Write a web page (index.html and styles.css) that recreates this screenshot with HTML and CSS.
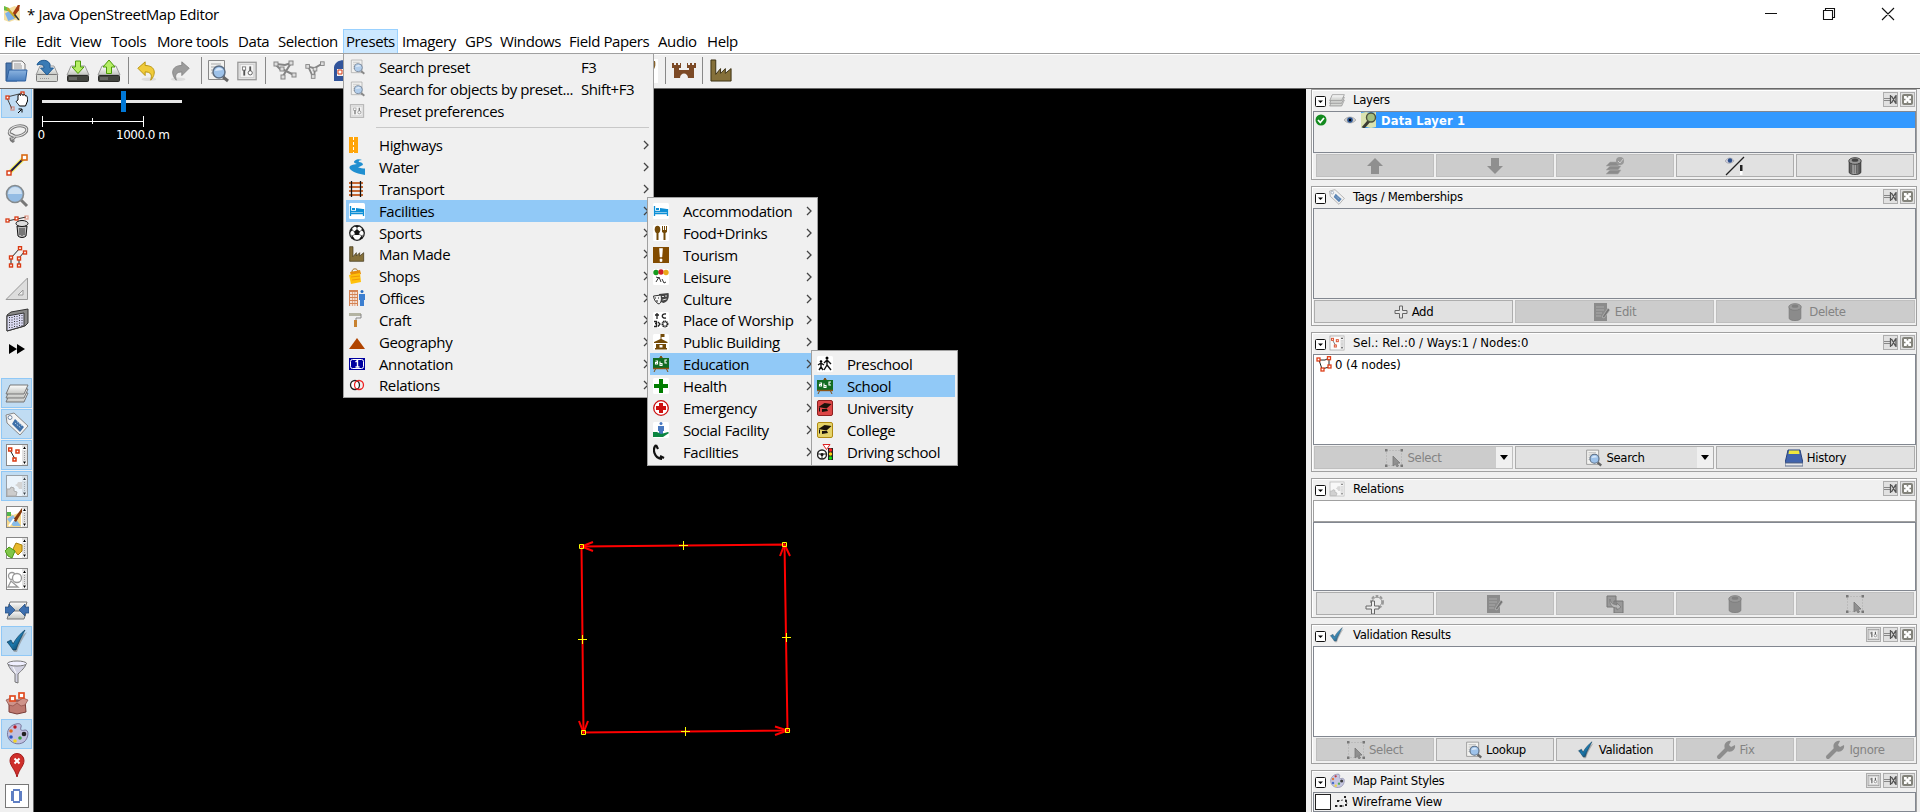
FILE: index.html
```html
<!DOCTYPE html>
<html lang="en">
<head>
<meta charset="utf-8">
<title>Java OpenStreetMap Editor</title>
<link rel="stylesheet" href="styles.css">
</head>
<body>
<svg class="defs" aria-hidden="true">
  <defs>
    <linearGradient id="g-gray" x2="0" y2="1"><stop offset="0" stop-color="#fff"/><stop offset="1" stop-color="#c2c4c0"/></linearGradient>
    <linearGradient id="g-blue" x2="0" y2="1"><stop offset="0" stop-color="#8cb4e0"/><stop offset="1" stop-color="#4a7fbf"/></linearGradient>
    <linearGradient id="g-check" x2="1" y2="1"><stop offset="0" stop-color="#0a3c60"/><stop offset=".5" stop-color="#1d7bb0"/><stop offset="1" stop-color="#0b2c44"/></linearGradient>
    <linearGradient id="g-can" x2="1" y2="0"><stop offset="0" stop-color="#444"/><stop offset=".4" stop-color="#bbb"/><stop offset="1" stop-color="#444"/></linearGradient>
  </defs>
  <symbol id="folder" viewBox="0 0 24 24"><path d="M2 4h7l1 2h3v16H2z" fill="#4b79b0" stroke="#2c5488"/><path d="M8 2h10l3 3v9H8z" fill="#f4f4f4" stroke="#777"/><path d="M10 5h7M10 7h8M10 9h8" stroke="#999"/><path d="M5 11h18l-1.500 11H2.500z" fill="url(#g-blue)" stroke="#2c5f9f"/></symbol>
  <symbol id="disk" viewBox="0 0 24 24"><path d="M5 7h14l4 9H1z" fill="url(#g-gray)" stroke="#999"/><rect x="1.500" y="15.500" width="21" height="7" rx="1" fill="#d5d7d3" stroke="#777"/></symbol>
  <symbol id="disk-dark" viewBox="0 0 24 24"><path d="M5 7h14l4 9H1z" fill="url(#g-gray)" stroke="#999"/><rect x="1.500" y="16.500" width="21" height="6" rx="1" fill="#42443f" stroke="#2a2b28"/><path d="M4 18v3M6 18v3M8 18v3M10 18v3" stroke="#aaa" stroke-width=".7"/></symbol>
  <symbol id="save" viewBox="0 0 24 24"><use href="#disk"/><path d="M2 6C3 1 12-1 15 5v4h3.500L12 16 5.500 9H9C9 5 5 5 2 6z" fill="#3a7bb5" stroke="#205a92"/><path d="M5 19.500h10" stroke="#999" stroke-dasharray="1 1"/></symbol>
  <symbol id="download" viewBox="0 0 24 24"><use href="#disk-dark"/><path d="M9.500 2h5v6H18l-6 6.500L6 8h3.500z" fill="#b6ee66" stroke="#4b9a08"/></symbol>
  <symbol id="upload" viewBox="0 0 24 24"><use href="#disk-dark"/><path d="M12 1l6 7h-3.500v6.500h-5V8H6z" fill="#b6ee66" stroke="#4b9a08"/></symbol>
  <symbol id="undo" viewBox="0 0 24 24"><ellipse cx="14" cy="21" rx="8" ry="2" fill="#ddd"/><path d="M2 9l8-7v4c12 0 12 10 6 16 2-6 0-9-6-9v4z" fill="#f0cb3a" stroke="#b58f08"/></symbol>
  <symbol id="redo" viewBox="0 0 24 24"><ellipse cx="10" cy="21" rx="8" ry="2" fill="#ddd"/><path d="M22 9l-8-7v4C2 6 2 16 8 22c-2-6 0-9 6-9v4z" fill="#9c9c9c" stroke="#858585"/></symbol>
  <symbol id="search" viewBox="0 0 24 24"><path d="M3.500 1.500h16v19h-16z" fill="#f2f2f0" stroke="#888"/><path d="M6 5h10M6 8h5M6 11h3M6 14h3" stroke="#aaa"/><path d="M18 18l5 4" stroke="#666" stroke-width="3"/><circle cx="14" cy="13" r="6" fill="#9dc2ea" stroke="#5c6e84" stroke-width="1.500"/><path d="M10 12c1-4 6-4 8-1z" fill="#d8e8fa"/></symbol>
  <symbol id="prefs" viewBox="0 0 24 24"><rect x="2" y="2.500" width="20" height="19" fill="#e2e2e2" stroke="#999" stroke-width="1.400"/><rect x="4.500" y="5" width="15" height="14" fill="#f4f4f4" stroke="#ccc"/><rect x="7" y="7.500" width="3.500" height="3.500" fill="#fff" stroke="#777"/><path d="M9 11v6" stroke="#555" stroke-width="2"/><path d="M15.500 7v6" stroke="#555" stroke-width="2"/><circle cx="15.500" cy="14" r="2.300" fill="#fff" stroke="#555"/></symbol>
  <symbol id="split" viewBox="0 0 24 24"><g stroke="#858585" fill="#ddd"><path d="M3 5l9 1 6-2-8 13M3 6l5 5M9 10l12 6" fill="none" stroke-width="2"/><rect x="1" y="3" width="4" height="4"/><rect x="7" y="8" width="4" height="4"/><rect x="16" y="2" width="4" height="4"/><rect x="19" y="14" width="4" height="4"/><rect x="8" y="16" width="4" height="4"/></g></symbol>
  <symbol id="combine" viewBox="0 0 24 24"><g stroke="#858585" fill="#ddd"><path d="M4 7l7 2 9-5M5 8l5 11M12 10l-1 8" fill="none" stroke-width="2"/><rect x="2" y="5" width="4" height="4"/><rect x="10" y="8" width="4" height="4"/><rect x="18" y="2" width="4" height="4"/><rect x="8" y="16" width="4" height="4"/></g></symbol>
  <symbol id="castle" viewBox="0 0 24 15"><path d="M0 0h2v2h2V0h2v2h2V0h1v5H7v2h10V5h-2V0h1v2h2V0h2v2h2V0h2v5h-2v10h-6c0-6-8-6-8 0H2V5H0z" fill="#7c4a26"/></symbol>
  <symbol id="factory" viewBox="0 0 24 24"><path d="M1 1h5v15l5-6v5l5-5v5l6-5v13H1z" fill="#85703a" stroke="#3a2f12"/></symbol>

  <symbol id="hand" viewBox="0 0 24 24"><path d="M2 6L18 2M2 7l5 11" stroke="#444" fill="none"/><g fill="#fff" stroke="#d93a13" stroke-width="1.300"><rect x="1" y="5" width="3" height="3"/><rect x="16" y="1" width="3" height="3"/><rect x="6" y="16" width="3" height="3" opacity=".45"/></g><path d="M13 9V5c0-2 2-2 2.500-.5 0-2 2.500-2 2.500 0 .5-1.500 2.500-1 2.500.5 2-.5 2 1 2 5l-2 5h-6c-1-2-4-4-3-5z" fill="#fff" stroke="#000"/><path d="M13 22l3.500-3.500M13.500 18H17v3.500" stroke="#000" fill="none"/></symbol>
  <symbol id="lasso" viewBox="0 0 24 24"><g fill="none" stroke="#777" stroke-width="3"><ellipse cx="13" cy="9" rx="9" ry="5" transform="rotate(-12 13 9)"/><path d="M5 12c5 1 6 5 1 5 0 2 2 2 3 3"/></g><g fill="none" stroke="#e8e8e8"><ellipse cx="13" cy="9" rx="9" ry="5" transform="rotate(-12 13 9)"/><path d="M5 12c5 1 6 5 1 5"/></g></symbol>
  <symbol id="draw" viewBox="0 0 24 24"><path d="M4 20L19 5" stroke="#f4ec58" stroke-width="4"/><path d="M4 20L19 5" stroke="#14144a" stroke-width="1.800"/><rect x="2" y="18" width="4" height="4" fill="#fff" stroke="#d93a13" stroke-width="1.400"/><rect x="17" y="2" width="5" height="5" fill="#fff" stroke="#d96a13" stroke-width="1.600"/></symbol>
  <symbol id="zoom" viewBox="0 0 24 24"><path d="M16 16l6 6" stroke="#777" stroke-width="3"/><circle cx="10" cy="10" r="8.500" fill="#94bce4" stroke="#858a8d" stroke-width="1.600"/><path d="M3 10a7 7 0 0 1 14 0z" fill="#ccdff1"/></symbol>
  <symbol id="can" viewBox="0 0 24 24"><path d="M5 7v13c2 3 12 3 14 0V7z" fill="url(#g-can)" stroke="#333"/><path d="M8 10v10M11 10v11M14 10v11M17 10v10" stroke="#555"/><ellipse cx="12" cy="6" rx="7.500" ry="4" fill="#999" stroke="#333"/><ellipse cx="12" cy="5" rx="4" ry="2" fill="#444"/></symbol>
  <symbol id="can-flat" viewBox="0 0 24 24"><path d="M5 7v13c2 3 12 3 14 0V7z" fill="#8b8b8b" stroke="#7c7c7c"/><ellipse cx="12" cy="6" rx="7.500" ry="4" fill="#999" stroke="#7c7c7c"/><ellipse cx="12" cy="5" rx="4" ry="2" fill="#808080"/></symbol>
  <symbol id="delnode" viewBox="0 0 24 24"><path d="M2 6l10-2 9-2" stroke="#333"/><g fill="#fff" stroke="#d93a13" stroke-width="1.300"><rect x="1" y="4" width="3" height="3"/><rect x="10" y="2" width="3" height="3"/><rect x="20" y="1" width="3" height="3" opacity=".4"/></g><path d="M12 11h10l-1 10c-2 2-6 2-8 0z" fill="#bbb" stroke="#111"/><path d="M15 13v7M17 13v8M19 13v7" stroke="#333"/><ellipse cx="17" cy="8.500" rx="6" ry="3" fill="#ddd" stroke="#111"/></symbol>
  <symbol id="parallel" viewBox="0 0 24 24"><path d="M6 20v-8l9-10M14 20v-8l6-7" stroke="#222" fill="none"/><g fill="#fff" stroke="#d93a13" stroke-width="1.400"><rect x="4.500" y="18" width="3" height="3"/><rect x="4.500" y="10" width="3" height="3"/><rect x="13.500" y="0.700" width="3" height="3"/><rect x="12.500" y="18" width="3" height="3"/><rect x="12.500" y="11" width="3" height="3"/><rect x="18.500" y="5" width="3" height="3"/></g></symbol>
  <symbol id="triangle" viewBox="0 0 24 24"><path d="M22.500 1v21.500H1zM18 13v5h-5z" fill="#ddd" fill-rule="evenodd" stroke="#999"/></symbol>
  <symbol id="building" viewBox="0 0 24 24"><path d="M2 7l4-3 17-3v14l-3 3L2 23z" fill="#888" stroke="#333"/><path d="M2 8l17-3v13L2 23z" fill="#d8d8f0" stroke="#333"/><path d="M4.500 9v12M7 9v12M9.500 8v12M12 8v12M14.500 7v12M17 7v11" stroke="#222" stroke-width=".9" stroke-dasharray="1 1.500"/></symbol>
  <symbol id="ff" viewBox="0 0 24 24"><path d="M4 7l8 5-8 5zM12 7l8 5-8 5z" fill="#000"/></symbol>
  <symbol id="layers" viewBox="0 0 24 24"><g fill="url(#g-gray)" stroke="#777"><path d="M5 12h18l-4 9H1z"/><path d="M5 8h18l-4 9H1z"/><path d="M5 4h18l-4 9H1z"/></g></symbol>
  <symbol id="tag" viewBox="0 0 24 24"><path d="M1 3l8-2L23 14l-8 9L2 11z" fill="#f4f4f4" stroke="#888"/><circle cx="5" cy="5.500" r="2" fill="#fff" stroke="#7186a3"/><path d="M10 7l9 8-4 5-8-8z" fill="#3f70a8"/><path d="M10 11l6 5M12 9.500l5 4.500" stroke="#b6cfe8" stroke-dasharray="1.500 1"/></symbol>
  <symbol id="window" viewBox="0 0 24 24"><rect x="1.500" y="1.500" width="21" height="21" fill="#fff" stroke="#888"/><path d="M17 2v20h5V2z" fill="#e2e2e2"/><path d="M17.500 4h4v3h-4zM17.500 18h4v3h-4z" fill="#fff"/><path d="M18 6l1.500-2.500L21 6zM18 18.500L19.500 21l1.500-2.500z" fill="#000"/><path d="M19.500 8v9" stroke="#999" stroke-dasharray="1 1"/></symbol>
  <symbol id="sel" viewBox="0 0 24 24"><use href="#window"/><path d="M5 7l5 9" stroke="#222"/><g fill="#fff" stroke="#d93a13" stroke-width="1.500"><rect x="3.700" y="5" width="3" height="3"/><rect x="11" y="7" width="3" height="3"/><rect x="8" y="15" width="3" height="3"/></g></symbol>
  <symbol id="rel" viewBox="0 0 24 24"><g opacity=".7"><use href="#window"/></g><path d="M2 15l3 0 1-2 3 1 0 3 3 1-1 4H2z" fill="#ccc" stroke="#aaa"/><path d="M10 11l2-1 1-2h4v7l-3 0-1-2z" fill="#d4d4d4"/></symbol>
  <symbol id="mapwin" viewBox="0 0 24 24"><use href="#window"/><path d="M2 7l6 3 8-3v15H2z" fill="#f8d98c"/><path d="M2 7h4v4H2z" fill="#53b54a"/><path d="M2 14l6-4 8 11H8z" fill="#88bce8"/><path d="M8 15l3 2L17 7V3z" fill="#86390b"/><path d="M4 21l5-7" stroke="#fff" stroke-width="2"/></symbol>
  <symbol id="histwin" viewBox="0 0 24 24"><use href="#window"/><path d="M8 13l3-6 6 2v6l-4 4z" fill="#e8b82c" stroke="#a97f09"/><path d="M0 15l4-4 6 4-3 7-4-2z" fill="#80c64a" stroke="#4a9b13"/></symbol>
  <symbol id="circwin" viewBox="0 0 24 24"><use href="#window"/><g fill="#fff" stroke="#999" stroke-width="1.300"><circle cx="7" cy="9" r="3.500"/><circle cx="12" cy="11" r="4.500"/><path d="M3 20l3-6 7 6z"/></g></symbol>
  <symbol id="conflict" viewBox="0 0 24 24"><g fill="url(#g-gray)" stroke="#777"><path d="M5 12h17l-3 9H2z"/><path d="M5 4h17l-3 9H2z"/></g><path d="M0 9h4V6l6 6-6 6v-3H0zM24 9h-4V6l-6 6 6 6v-3h4z" fill="#3e70b0" stroke="#1f4a80" stroke-width=".7"/></symbol>
  <symbol id="check" viewBox="0 0 24 24"><path d="M4 15l4-2 2 3C13 10 18 5 22 3 18 9 14 16 12 23H9C7 20 6 17 4 15z" fill="#888" opacity=".6"/><path d="M2 13l4-2 2 4C11 9 16 4 20 1c-3 6-7 13-9 20H8C6 18 4 15 2 13z" fill="url(#g-check)" stroke="#07334f" stroke-width=".6"/></symbol>
  <symbol id="funnel" viewBox="0 0 24 24"><path d="M3 3c0 4 5 9 7 11v8l3 1v-9c3-3 8-7 8-11z" fill="#d2d2e2" stroke="#777"/><ellipse cx="12" cy="3.500" rx="9.500" ry="2.500" fill="#efefff" stroke="#777"/><path d="M8 7l3 6" stroke="#fff"/></symbol>
  <symbol id="box" viewBox="0 0 24 24"><path d="M4 9h16l1 12-9 2-8-2z" fill="#bd7970" stroke="#7a3d38"/><path d="M1 9l5-2 6 4 6-4 5 2-3 5-4 1-4-3-4 3-4-1z" fill="#cf948b" stroke="#8b4b45" stroke-width=".7"/><g fill="#fff" stroke="#e04a20" stroke-width="1.700"><rect x="5" y="5" width="5" height="5"/><rect x="14" y="2" width="5" height="5"/></g></symbol>
  <symbol id="palette" viewBox="0 0 24 24"><path d="M11 2c3-1 6 0 5 3-1 3 0 4 4 3 5 0 3 9-1 12-6 4-14 1-16-5C1 9 5 3 11 2z" fill="#c0c0e0" stroke="#77779c"/><circle cx="10" cy="5" r="1.700" fill="#b51a23"/><circle cx="6" cy="9" r="1.800" fill="#e0681b"/><circle cx="6" cy="15" r="1.800" fill="#2a55c5"/><circle cx="10" cy="19" r="1.800" fill="#f1d423"/><circle cx="15" cy="16" r="1.800" fill="#36a042"/><circle cx="19" cy="12" r="2.300" fill="#222"/></symbol>
  <symbol id="pin" viewBox="0 0 24 24"><path d="M12 24C10 16 5 13 5 7.500a7 7 0 0 1 14 0C19 13 14 16 12 24z" fill="#cf2f2b" stroke="#a31b1b"/><path d="M9.500 5.500l5 5M14.500 5.500l-5 5" stroke="#fff" stroke-width="2"/></symbol>
  <symbol id="zero" viewBox="0 0 24 24"><rect x=".5" y=".5" width="23" height="23" fill="#fff" stroke="#777"/><path d="M8 5h7v2h2v10h-2v2H8v-2H6V7h2zM9 7v10h5V7z" fill="#5f7fc4" fill-rule="evenodd"/></symbol>
  <symbol id="logo" viewBox="0 0 16 16"><path d="M0 1l5 2 5-2 5 2v12l-5-1-5 2-5-2z" fill="#f5dfa0"/><path d="M0 1l5 2v3L0 5z" fill="#66bd45"/><path d="M1 8l5-3 4 8-6 2z" fill="#7fb2e8"/><path d="M8 8l5-8h2l-1 5-4 5z" fill="#a33a11"/><path d="M3 3l8 9" stroke="#caa628" stroke-width="2"/><path d="M10 9l4 5" stroke="#333" stroke-width="1.500"/></symbol>

  <symbol id="m-road" viewBox="0 0 16 16"><path d="M0 0h9v16H0z" fill="#ffa50a"/><path d="M4.500 0v16" stroke="#fff" stroke-dasharray="3 2"/></symbol>
  <symbol id="m-water" viewBox="0 0 16 16"><path d="M6 1.500C8 0 11 0 13 1c-3 .5-4 1-3 2 3 .5 6 2 2 4l-3 1.500c2 .5 5 1 7 1V16C10 15 3 13 1 10-1 7 3 5.500 8 5 5 4 4 3 6 1.500z" fill="#218fd0"/></symbol>
  <symbol id="m-rail" viewBox="0 0 16 16"><path d="M0 2h14M0 6h14M0 10h14M0 14h14" stroke="#c66a35" stroke-width="2"/><path d="M2.500 0v16M11.500 0v16" stroke="#111" stroke-width="1.300"/></symbol>
  <symbol id="m-bed" viewBox="0 0 16 16"><rect width="16" height="16" rx="1.500" fill="#fff"/><path d="M1.500 3v10M1 10.500h14M14.500 6v7M2 8.500h12" stroke="#0d8fd6" stroke-width="1.300"/><path d="M3 5h3v2H3zM7 5l7 1v2H7z" fill="#0d8fd6"/></symbol>
  <symbol id="m-ball" viewBox="0 0 16 16"><circle cx="8" cy="8" r="7.300" fill="#fff" stroke="#222" stroke-width="1.300"/><path d="M5 6.500L8 4.300l3 2.200-1.200 3.500H6.200zM5 .8l3 2 3-2zM.5 8L3.500 5 3 2.500zM15.500 8l-3-3 .5-2.500zM2.500 13.500v-4l4 5.500zM13.500 13.500v-4l-4 5.500z" fill="#111"/><path d="M8 2v3M3 5l3 2M13 5l-3 2M3 11l3.500-2M13 11l-3.500-2" stroke="#333" stroke-width=".7"/></symbol>
  <symbol id="m-shop" viewBox="0 0 16 16"><path d="M3 4c0-4 5-4 6-1" stroke="#9b640b" fill="none"/><path d="M1 4l10-2 1 4-10 2z" fill="#e78e08"/><path d="M0 7l11-2 1 9-10 2z" fill="#ffc10a"/><path d="M2 9l9-1M3 12l8-1" stroke="#ee960b"/></symbol>
  <symbol id="m-office" viewBox="0 0 16 16"><path d="M0 0h9v16H0z" fill="#d48455"/><path d="M1 3h7M1 6h7M1 9h7M1 12h7M1 15h7" stroke="#fff" stroke-width="1.500" stroke-dasharray="2 .6"/><circle cx="13" cy="1.500" r="1.500" fill="#276cc0"/><path d="M10 4h6v6h-1v6h-4v-6h-1z" fill="#3d7fd0"/></symbol>
  <symbol id="m-craft" viewBox="0 0 16 16"><path d="M0 1h12v3H0z" fill="#b4b4a2"/><path d="M12 2v4H7v3" fill="none" stroke="#888"/><path d="M5 8h3v7H5z" fill="#c78130"/></symbol>
  <symbol id="m-geo" viewBox="0 0 16 16"><path d="M8 4l8 11H0z" fill="#b04400"/></symbol>
  <symbol id="m-note" viewBox="0 0 16 16"><path d="M0 2h16v12H0z" fill="#0000a0"/><rect x="1.500" y="3.500" width="13" height="9" rx="2" fill="none" stroke="#fff"/><path d="M6.500 6l2-1.500V11M6.500 11h4" stroke="#fff" stroke-width="1.400" fill="none"/></symbol>
  <symbol id="m-rings" viewBox="0 0 16 16"><circle cx="6" cy="8" r="4.500" fill="#fff" stroke="#222" stroke-width="1.300"/><circle cx="10" cy="8" r="4.500" fill="none" stroke="#e22" stroke-width="1.300"/></symbol>
  <symbol id="m-food" viewBox="0 0 16 16"><rect width="16" height="16" rx="1.500" fill="#fff"/><ellipse cx="4.500" cy="4.500" rx="2.800" ry="3.700" fill="#734a08"/><path d="M3.500 7h2v8h-2zM9 1h1v4h1V1h1v4h1V1h1v6l-1.500 1v7h-2V8L9 7z" fill="#734a08"/></symbol>
  <symbol id="m-tour" viewBox="0 0 16 16"><path d="M0 0h16v16H0z" fill="#824b00"/><path d="M6.500 1.500h3l-.6 8.500H7.100zM7 12h2v2.500H7z" fill="#fff" stroke="#fff" stroke-width=".6"/></symbol>
  <symbol id="m-fun" viewBox="0 0 16 16"><rect width="16" height="16" rx="1.500" fill="#fff"/><circle cx="3" cy="3.500" r="2.700" fill="#159b1e"/><circle cx="8" cy="3" r="2.700" fill="#d01f28"/><circle cx="13" cy="3.500" r="2.700" fill="#eba91a"/><path d="M3 8l3 1M6 8l-3 5M6 8l2 5M9 10l2 4 2-1" stroke="#333" fill="none"/></symbol>
  <symbol id="m-mask" viewBox="0 0 16 16"><path d="M6 3l9.500-1c1 5-1 9-5 10-4-1-5-4-4.500-9z" fill="#444"/><path d="M.5 5L8 4c1 5 0 8-2 9-3-1-5-4-5.500-8z" fill="#f4f4f4" stroke="#333"/><path d="M2 7h1M5 7h1M3 10l2 0" stroke="#222"/><path d="M9.500 9l4-1M9 5.500h2M12 5h2" stroke="#ddd"/></symbol>
  <symbol id="m-pray" viewBox="0 0 16 16"><rect width="16" height="16" rx="1.500" fill="#fff"/><path d="M4 1v6M2 3h4M13 2c-5-1-5 5 0 4M1 9.500h2.500v2H2h1.500v3H1M5 10l2 2-2 2.500" stroke="#222" stroke-width="1.300" fill="none"/><circle cx="12" cy="12" r="2.500" fill="none" stroke="#222" stroke-width="2" stroke-dasharray="1.200 .4"/></symbol>
  <symbol id="m-public" viewBox="0 0 16 16"><rect width="16" height="16" rx="1.500" fill="#fff"/><path d="M7.500 0h4v3h-3v2l6 3v1H1V8l6.500-3zM3 10h10v4h1v1.500H2V14h1z" fill="#734a08"/><path d="M6.500 11h3v2.500h-3z" fill="#fff"/></symbol>
  <symbol id="m-school" viewBox="0 0 16 16"><path d="M3 12l-2 4M13 12l2 4M8 0l-2 3h4z" stroke="#7e4a0b" fill="#7e4a0b"/><path d="M0 2h16v10H0z" fill="#116b22"/><path d="M0 12.500h16" stroke="#8b5415" stroke-width="1.400"/><path d="M2.500 5h2v3h-2V6.500h2M7 5.500v4h2v-2H7M14 4h-2v3h2" stroke="#fff" stroke-width="1.100" fill="none"/></symbol>
  <symbol id="m-health" viewBox="0 0 16 16"><rect width="16" height="16" rx="1.500" fill="#fff"/><path d="M6 1h4v5h5v4h-5v5H6v-5H1V6h5z" fill="#007d00"/></symbol>
  <symbol id="m-emerg" viewBox="0 0 16 16"><circle cx="8" cy="8" r="7.300" fill="#fff" stroke="#cd1010" stroke-width="1.300"/><path d="M6 3h4v3h3v4h-3v3H6v-3H3V6h3z" fill="#cd1010"/></symbol>
  <symbol id="m-social" viewBox="0 0 16 16"><rect width="16" height="16" rx="1.500" fill="#fff"/><circle cx="8" cy="1.500" r="1.500" fill="#4878c0"/><path d="M5 4h6v5h-1v3H6V9H5z" fill="#4878c0"/><path d="M0 10l4 0 4 2 7-2 1 1-6 4H0z" fill="#0b8540"/></symbol>
  <symbol id="m-phone" viewBox="0 0 16 16"><path d="M3 1C-1 5 1 14 9 15M3 1l2 4M7 12l4 2" fill="none" stroke="#111" stroke-width="2.200"/></symbol>
  <symbol id="m-kids" viewBox="0 0 16 16"><rect width="16" height="16" rx="1.500" fill="#fff"/><circle cx="10" cy="2" r="1.500"/><circle cx="4" cy="5.500" r="1.300"/><path d="M10 4v5l4 5M10 9l-3 5M7 7l3-3 4 4M4 7v4l2 3M4 11l-2 3M1 9l3-2 3 2" stroke="#111" stroke-width="1.400" fill="none"/></symbol>
  <symbol id="m-cap" viewBox="0 0 16 16"><path d="M1.500 7l6-4 7 1-5 4.500zM5 9l5 0 1 2-6 1z" fill="#1a120a"/><path d="M2.500 7.500v4" stroke="#111"/></symbol>
  <symbol id="m-uni" viewBox="0 0 16 16"><rect x=".5" y=".5" width="15" height="15" rx="1.500" fill="#dc4646" stroke="#8e2020"/><use href="#m-cap"/></symbol>
  <symbol id="m-col" viewBox="0 0 16 16"><rect x=".5" y=".5" width="15" height="15" rx="1.500" fill="#e5d36a" stroke="#b08a12"/><use href="#m-cap"/></symbol>
  <symbol id="m-drive" viewBox="0 0 16 16"><path d="M6 .5h7l-3.500 5z" fill="#fff" stroke="#d22"/><circle cx="5" cy="10.500" r="4.500" fill="#fff" stroke="#222" stroke-width="1.400"/><circle cx="5" cy="10.500" r="1.500"/><path d="M1 10h8M5 11v4" stroke="#222"/><path d="M11 4h5v12h-5z" fill="#222"/><circle cx="13.500" cy="6" r="1.700" fill="#f22"/><circle cx="13.500" cy="10" r="1.700" fill="#fc1"/><circle cx="13.500" cy="14" r="1.700" fill="#1d1"/></symbol>

  <symbol id="p-min" viewBox="0 0 11 11"><rect x=".5" y=".5" width="10" height="10" rx="1" fill="#fff" stroke="#111"/><path d="M3 4.500h5L5.500 7z"/></symbol>
  <symbol id="p-pin" viewBox="0 0 13 13"><path d="M0 5.500h6M0 7.500h6" stroke="#888"/><path d="M6.500 2v9M7.500 3l4 7M7.500 10l4-7M12 2v9" stroke="#555" stroke-width="1.300"/></symbol>
  <symbol id="p-close" viewBox="0 0 13 13"><rect x="2" y="2" width="9" height="9" rx="1" fill="#fff" stroke="#83837b" stroke-width="2"/><path d="M6.500 2v2.500M6.500 8.500V11M2 6.500h2.500M8.500 6.500H11" stroke="#83837b" stroke-width="1.500"/></symbol>
  <symbol id="p-up" viewBox="0 0 16 16"><path d="M8 0l8 8h-4v8H4V8H0z" fill="#8f8f8f"/></symbol>
  <symbol id="p-down" viewBox="0 0 16 16"><path d="M8 16l8-8h-4V0H4v8H0z" fill="#8f8f8f"/></symbol>
  <symbol id="p-stack" viewBox="0 0 18 18"><path d="M4 5h11l-3 4H0zM4 9h11l-3 4H0zM4 13h11l-3 4H0z" fill="#8b8b8b" stroke="#aaa" stroke-width=".6"/><circle cx="14" cy="4" r="4" fill="#999"/><path d="M12 4l2 2 3-4" stroke="#ccc" fill="none"/></symbol>
  <symbol id="p-vis" viewBox="0 0 20 20"><path d="M1 19L19 1" stroke="#222" stroke-width="1.300"/><path d="M0 5c3-4 7-4 9 0-3 3-7 3-9 0z" fill="#ccd" stroke="#999" stroke-width=".6"/><circle cx="5" cy="4.500" r="2.200" fill="#2c4f8a"/><path d="M15 9h2.500v6H15z" fill="#222"/><path d="M15 15h2.500v4H15z" fill="#fff"/></symbol>
  <symbol id="p-plus" viewBox="0 0 14 14"><path d="M5.500 1h3v4.500H13v3H8.500V13h-3V8.500H1v-3h4.500z" fill="#e6e6e6" stroke="#666"/></symbol>
  <symbol id="p-edit" viewBox="0 0 18 18"><path d="M1 0h13v18H1z" fill="#8b8b8b"/><path d="M3 4h8M3 7h8M3 10h6M3 13h5" stroke="#aaa"/><path d="M9 14l6-9 2 2-6 8z" fill="#777" stroke="#bbb" stroke-width=".7"/></symbol>
  <symbol id="p-select" viewBox="0 0 18 18"><path d="M1.500 1.500h15v15h-15z" fill="none" stroke="#aaa" stroke-dasharray="1 2"/><path d="M0 0h2.500v2.500H0zM15.500 0H18v2.500h-2.500zM0 15.500h2.500V18H0zM15.500 15.500H18V18h-2.500z" fill="#777"/><path d="M8 7l7 7-3 .3 1.500 2.700-1.500 1-1.500-3L8 17z" fill="#909090" stroke="#777" stroke-width=".8"/></symbol>
  <symbol id="p-book" viewBox="0 0 18 18"><path d="M3 1h12l3 13H0z" fill="#4164ad" stroke="#27427c"/><path d="M4 1.500h10l.5 3.500h-11z" fill="#efe63c"/><path d="M0 14h18v3H0z" fill="#e8e8e8" stroke="#5e6e8e"/></symbol>
  <symbol id="p-gearplus" viewBox="0 0 20 20"><circle cx="12" cy="8" r="5.500" fill="#eee" stroke="#999" stroke-width="3" stroke-dasharray="2.500 1.500"/><circle cx="12" cy="8" r="4.800" fill="#e8e8e8" stroke="#999"/><path d="M6.500 7h3v5H14v3H9.500v5h-3v-5H1v-3h5.500z" fill="#eee" stroke="#666"/></symbol>
  <symbol id="p-copy" viewBox="0 0 18 18"><path d="M1 1h9v11H1zM8 6h9v12H8z" fill="#999" stroke="#777"/><path d="M4 4c1 5 3 5 7 6V8l4 4-4 3v-2C6 13 3 9 4 4z" fill="#b5b5b5" stroke="#777" stroke-width=".7"/></symbol>
  <symbol id="p-wrench" viewBox="0 0 20 20"><path d="M3 17l8-8" stroke="#8d8d8d" stroke-width="4" stroke-linecap="round"/><path d="M9 9C7 4 11 0 15 1l-2 4 2 2 4-2c1 5-4 8-8 6z" fill="#8d8d8d"/></symbol>
  <symbol id="p-ok" viewBox="0 0 12 12"><circle cx="6" cy="6" r="5.500" fill="#138a1f"/><path d="M3 6l2.300 2.500L9 4" stroke="#fff" stroke-width="1.800" fill="none"/></symbol>
  <symbol id="p-eye" viewBox="0 0 12 10"><path d="M0 5c3-4 9-4 12 0-3 4-9 4-12 0z" fill="#ccc" stroke="#999" stroke-width=".6"/><circle cx="6" cy="5" r="2.800" fill="#2a5390"/><circle cx="6" cy="5" r="1.200"/></symbol>
  <symbol id="p-osm" viewBox="0 0 16 16"><path d="M0 1l5-1 5 1 5-1v15l-5 1-5-1-5 1z" fill="#dbe3b0"/><path d="M8 9L2 16" stroke="#3c3c32" stroke-width="3"/><circle cx="10" cy="5.500" r="4.500" fill="#a4bf80" stroke="#4c513d" stroke-width="1.400"/></symbol>
  <symbol id="p-way" viewBox="0 0 16 16"><path d="M3 4l6 0 4-2 0 9-7 2z" fill="none" stroke="#222"/><g fill="#fff" stroke="#dd3e18" stroke-width="1.300"><rect x="1" y="2" width="3" height="3"/><rect x="11.500" y=".7" width="3" height="3"/><rect x="12" y="9" width="3" height="3"/><rect x="5" y="12" width="3" height="3"/></g></symbol>
  <symbol id="p-wire" viewBox="0 0 13 13"><path d="M1 11h9M10 1l2 8M3 6l5-1" stroke="#555" stroke-dasharray="2 1"/><path d="M0 10h2v2H0zM5 10h2v2H5zM10 9h2v2h-2zM9 1h2v2H9zM2 5h2v2H2zM10 5h2v2h-2z" fill="#222"/></symbol>
  <symbol id="chev" viewBox="0 0 6 10"><path d="M1 1l4 4-4 4" fill="none" stroke="#444" stroke-width="1.300"/></symbol>
</svg>

<header class="titlebar">
  <svg class="app-icon"><use href="#logo"/></svg>
  <span class="app-title">* Java OpenStreetMap Editor</span>
  <svg class="window-controls" viewBox="0 0 160 30"><g fill="none" stroke="#111" stroke-width="1.100"><path d="M5 14.500h12M63.500 11.500h9v9h-9zM65.500 11V9.500h9v9H73M122 9l12 12M134 9l-12 12"/></g></svg>
</header>
<nav class="menubar">
  <span class="w-file">File</span><span class="w-edit">Edit</span><span class="w-view">View</span><span class="w-tools">Tools</span><span class="w-more">More tools</span><span class="w-data">Data</span><span class="w-selection">Selection</span><span class="w-presets open">Presets</span><span class="w-imagery">Imagery</span><span class="w-gps">GPS</span><span class="w-windows">Windows</span><span class="w-field">Field Papers</span><span class="w-audio">Audio</span><span class="w-help">Help</span>
</nav>
<div class="toolbar">
  <svg><use href="#folder"/></svg><svg><use href="#save"/></svg><svg><use href="#download"/></svg><svg><use href="#upload"/></svg><i></i>
  <svg class="t-undo"><use href="#undo"/></svg><svg class="t-redo"><use href="#redo"/></svg><i></i>
  <svg class="t-search"><use href="#search"/></svg><svg class="t-prefs"><use href="#prefs"/></svg><i></i>
  <svg><use href="#split"/></svg><svg class="t-combine"><use href="#combine"/></svg>
  <svg class="t-globe" viewBox="0 0 20 24"><path d="M1 22V8c2-8 12-8 16-4v18z" fill="#31549b"/><path d="M4 10h16v7H4z" fill="#f4f4f4"/><path d="M5 11h4v4H5z" fill="#fff" stroke="#d93a13"/></svg>
  <svg class="t-cup" viewBox="0 0 6 24"><path d="M0 0h6v24H0z" fill="#fff"/><path d="M0 2h3c1 4 0 8-3 10z" fill="#85612a"/></svg><i></i>
  <svg class="t-castle"><use href="#castle"/></svg><i></i><svg class="t-factory"><use href="#factory"/></svg>
</div>

<main class="workspace">
  <aside class="side-tools">
    <div class="tools">
      <b class="on"><svg><use href="#hand"/></svg></b><b><svg><use href="#lasso"/></svg></b><b><svg><use href="#draw"/></svg></b><b><svg><use href="#zoom"/></svg></b><b><svg><use href="#delnode"/></svg></b><b><svg><use href="#parallel"/></svg></b><b><svg><use href="#triangle"/></svg></b><b><svg><use href="#building"/></svg></b><b class="short"><svg><use href="#ff"/></svg></b>
    </div>
    <div class="tools">
      <b class="on"><svg><use href="#layers"/></svg></b><b class="on"><svg><use href="#tag"/></svg></b><b class="on"><svg><use href="#sel"/></svg></b><b class="on"><svg><use href="#rel"/></svg></b><b><svg><use href="#mapwin"/></svg></b><b><svg><use href="#histwin"/></svg></b><b><svg><use href="#circwin"/></svg></b><b><svg><use href="#conflict"/></svg></b><b class="on"><svg><use href="#check"/></svg></b><b><svg><use href="#funnel"/></svg></b><b><svg><use href="#box"/></svg></b><b class="on"><svg><use href="#palette"/></svg></b><b><svg><use href="#pin"/></svg></b><b><svg><use href="#zero"/></svg></b>
    </div>
  </aside>

  <section class="map">
    <svg class="canvas" viewBox="34 89 1272 723">
      <path d="M42 101.500h140" stroke="#e7e7e7" stroke-width="3"/><path d="M121 91h5v21h-5z" fill="#0078d7"/>
      <path d="M42.500 116v11M143.500 116v11M92.500 118v6M42 121.500h102" stroke="#fff" fill="none"/>
      <text x="37.500" y="139">0</text><text x="116" y="139" textLength="54">1000.0 m</text>
      <g class="way">
        <path d="M581.500 546.500L583.500 732.500 787.500 730.500 784.500 544.500z"/>
        <path d="M593 542l-11.500 4.500L593 551M579 721l4.500 11.500L588 721M775 726.500l12.500 4L775 735M780 556l4.500-11.500L790 556"/>
      </g>
      <g class="nodes">
        <path d="M579.500 544.500h4v4h-4zM782.500 542.500h4v4h-4zM785.500 728.500h4v4h-4zM581.500 730.500h4v4h-4z"/>
        <path d="M679 545.500h9M683.500 541v9M578 639.500h9M582.500 635v9M782 637.500h9M786.500 633v9M681 731.500h9M685.500 727v9"/>
      </g>
    </svg>
  </section>

  <aside class="panels">
    <section class="panel layers">
      <header><svg class="min"><use href="#p-min"/></svg><svg class="ico"><use href="#layers"/></svg><h2>Layers</h2><svg class="hb"><use href="#p-pin"/></svg><svg class="hb"><use href="#p-close"/></svg></header>
      <div class="list gray layer-list"><div class="layer-row"><svg class="ok"><use href="#p-ok"/></svg><svg class="eye"><use href="#p-eye"/></svg><div class="layer-name"><svg><use href="#p-osm"/></svg>Data Layer 1</div></div></div>
      <footer class="five"><button disabled><svg class="s16"><use href="#p-up"/></svg></button><button disabled><svg class="s16"><use href="#p-down"/></svg></button><button disabled><svg><use href="#p-stack"/></svg></button><button><svg class="s20"><use href="#p-vis"/></svg></button><button><svg class="s20"><use href="#can"/></svg></button></footer>
    </section>
    <section class="panel">
      <header><svg class="min"><use href="#p-min"/></svg><svg class="ico"><use href="#tag"/></svg><h2>Tags / Memberships</h2><svg class="hb"><use href="#p-pin"/></svg><svg class="hb"><use href="#p-close"/></svg></header>
      <div class="list gray"></div>
      <footer class="three"><button><svg class="s14"><use href="#p-plus"/></svg>Add</button><button disabled><svg><use href="#p-edit"/></svg>Edit</button><button disabled><svg class="s20"><use href="#can-flat"/></svg>Delete</button></footer>
    </section>
    <section class="panel">
      <header><svg class="min"><use href="#p-min"/></svg><svg class="ico"><use href="#sel"/></svg><h2 class="wide">Sel.: Rel.:0 / Ways:1 / Nodes:0</h2><svg class="hb"><use href="#p-pin"/></svg><svg class="hb"><use href="#p-close"/></svg></header>
      <div class="list"><div class="way-row"><svg><use href="#p-way"/></svg>0 (4 nodes)</div></div>
      <footer class="three"><button disabled class="drop"><svg><use href="#p-select"/></svg>Select<em></em></button><button class="drop"><svg><use href="#search"/></svg>Search<em></em></button><button><svg><use href="#p-book"/></svg>History</button></footer>
    </section>
    <section class="panel">
      <header><svg class="min"><use href="#p-min"/></svg><svg class="ico"><use href="#rel"/></svg><h2>Relations</h2><svg class="hb"><use href="#p-pin"/></svg><svg class="hb"><use href="#p-close"/></svg></header>
      <div class="filter"></div><div class="list"></div>
      <footer class="five"><button><svg class="s20"><use href="#p-gearplus"/></svg></button><button disabled><svg><use href="#p-edit"/></svg></button><button disabled><svg><use href="#p-copy"/></svg></button><button disabled><svg class="s20"><use href="#can-flat"/></svg></button><button disabled><svg><use href="#p-select"/></svg></button></footer>
    </section>
    <section class="panel">
      <header><svg class="min"><use href="#p-min"/></svg><svg class="ico"><use href="#check"/></svg><h2>Validation Results</h2><svg class="hb"><use href="#prefs"/></svg><svg class="hb"><use href="#p-pin"/></svg><svg class="hb"><use href="#p-close"/></svg></header>
      <div class="list"></div>
      <footer class="five"><button disabled><svg><use href="#p-select"/></svg>Select</button><button><svg><use href="#search"/></svg>Lookup</button><button><svg><use href="#check"/></svg>Validation</button><button disabled><svg class="s20"><use href="#p-wrench"/></svg>Fix</button><button disabled><svg class="s20"><use href="#p-wrench"/></svg>Ignore</button></footer>
    </section>
    <section class="panel last">
      <header><svg class="min"><use href="#p-min"/></svg><svg class="ico"><use href="#palette"/></svg><h2>Map Paint Styles</h2><svg class="hb"><use href="#prefs"/></svg><svg class="hb"><use href="#p-pin"/></svg><svg class="hb"><use href="#p-close"/></svg></header>
      <div class="list gray"><div class="style-row"><i></i><svg><use href="#p-wire"/></svg>Wireframe View</div><div class="style-edge"></div></div>
    </section>
  </aside>
</main>

<div class="popup popup-presets">
  <div class="item"><svg class="fade"><use href="#search"/></svg><span>Search preset</span><kbd>F3</kbd></div>
  <div class="item"><svg class="fade"><use href="#search"/></svg><span>Search for objects by preset...</span><kbd>Shift+F3</kbd></div>
  <div class="item"><svg class="fade"><use href="#prefs"/></svg><span>Preset preferences</span></div>
  <hr>
  <div class="item"><svg><use href="#m-road"/></svg><span>Highways</span><svg class="chev"><use href="#chev"/></svg></div>
  <div class="item"><svg><use href="#m-water"/></svg><span>Water</span><svg class="chev"><use href="#chev"/></svg></div>
  <div class="item"><svg><use href="#m-rail"/></svg><span>Transport</span><svg class="chev"><use href="#chev"/></svg></div>
  <div class="item hot"><svg><use href="#m-bed"/></svg><span>Facilities</span><svg class="chev"><use href="#chev"/></svg></div>
  <div class="item"><svg><use href="#m-ball"/></svg><span>Sports</span><svg class="chev"><use href="#chev"/></svg></div>
  <div class="item low"><svg><use href="#factory"/></svg><span>Man Made</span><svg class="chev"><use href="#chev"/></svg></div>
  <div class="item"><svg><use href="#m-shop"/></svg><span>Shops</span><svg class="chev"><use href="#chev"/></svg></div>
  <div class="item"><svg><use href="#m-office"/></svg><span>Offices</span><svg class="chev"><use href="#chev"/></svg></div>
  <div class="item"><svg><use href="#m-craft"/></svg><span>Craft</span><svg class="chev"><use href="#chev"/></svg></div>
  <div class="item"><svg><use href="#m-geo"/></svg><span>Geography</span><svg class="chev"><use href="#chev"/></svg></div>
  <div class="item"><svg><use href="#m-note"/></svg><span>Annotation</span><svg class="chev"><use href="#chev"/></svg></div>
  <div class="item low"><svg><use href="#m-rings"/></svg><span>Relations</span><svg class="chev"><use href="#chev"/></svg></div>
</div>
<div class="popup popup-facilities">
  <div class="item"><svg><use href="#m-bed"/></svg><span>Accommodation</span><svg class="chev"><use href="#chev"/></svg></div>
  <div class="item"><svg><use href="#m-food"/></svg><span>Food+Drinks</span><svg class="chev"><use href="#chev"/></svg></div>
  <div class="item"><svg><use href="#m-tour"/></svg><span>Tourism</span><svg class="chev"><use href="#chev"/></svg></div>
  <div class="item"><svg><use href="#m-fun"/></svg><span>Leisure</span><svg class="chev"><use href="#chev"/></svg></div>
  <div class="item"><svg><use href="#m-mask"/></svg><span>Culture</span><svg class="chev"><use href="#chev"/></svg></div>
  <div class="item low"><svg><use href="#m-pray"/></svg><span>Place of Worship</span><svg class="chev"><use href="#chev"/></svg></div>
  <div class="item"><svg><use href="#m-public"/></svg><span>Public Building</span><svg class="chev"><use href="#chev"/></svg></div>
  <div class="item hot"><svg><use href="#m-school"/></svg><span>Education</span><svg class="chev"><use href="#chev"/></svg></div>
  <div class="item"><svg><use href="#m-health"/></svg><span>Health</span><svg class="chev"><use href="#chev"/></svg></div>
  <div class="item"><svg><use href="#m-emerg"/></svg><span>Emergency</span><svg class="chev"><use href="#chev"/></svg></div>
  <div class="item"><svg><use href="#m-social"/></svg><span>Social Facility</span><svg class="chev"><use href="#chev"/></svg></div>
  <div class="item"><svg><use href="#m-phone"/></svg><span>Facilities</span><svg class="chev"><use href="#chev"/></svg></div>
</div>
<div class="popup popup-education">
  <div class="item"><svg><use href="#m-kids"/></svg><span>Preschool</span></div>
  <div class="item hot"><svg><use href="#m-school"/></svg><span>School</span></div>
  <div class="item"><svg><use href="#m-uni"/></svg><span>University</span></div>
  <div class="item"><svg><use href="#m-col"/></svg><span>College</span></div>
  <div class="item"><svg><use href="#m-drive"/></svg><span>Driving school</span></div>
</div>
</body>
</html>
```
FILE: styles.css
```css
* { box-sizing: border-box; }
body {
  margin: 0;
  height: 812px;
  overflow: hidden;
  position: relative;
  display: flex;
  flex-direction: column;
  background: #fff;
  color: #000;
  font: 15px "Open Sans", "Noto Sans", sans-serif;
}
svg { display: block; flex: none; }
.defs { position: absolute; width: 0; height: 0; }

.titlebar { height: 29px; flex: none; display: flex; align-items: center; padding: 0 0 2px 4px; }
.app-icon { width: 17px; height: 17px; }
.app-title { margin-left: 6px; letter-spacing: -0.35px; }
.window-controls { width: 160px; height: 30px; margin-left: auto; }

.menubar { height: 25px; flex: none; display: flex; border-bottom: 1px solid #a0a0a0; line-height: 24px; letter-spacing: -0.4px; white-space: nowrap; }
.menubar span { padding-left: 4px; }
.w-file { width: 32px; }
.w-edit { width: 34px; }
.w-view { width: 41px; }
.w-tools { width: 46px; }
.w-more { width: 81px; }
.w-data { width: 40px; }
.w-selection { width: 69px; }
.w-presets { width: 55px; }
.menubar .open { background: #cce8ff; border: 1px solid #99d1ff; border-bottom: 0; padding-left: 2px; line-height: 22px; }
.w-imagery { width: 63px; }
.w-gps { width: 35px; }
.w-windows { width: 69px; }
.w-field { width: 89px; }
.w-audio { width: 49px; }

.toolbar { height: 34px; flex: none; display: flex; align-items: center; background: #f0f0f0; border-top: 1px solid #fff; padding: 0 0 2px 4px; gap: 7px; }
.toolbar svg { width: 24px; height: 24px; }
.toolbar i { width: 1px; height: 27px; background: #888; }
.toolbar .t-undo { width: 22px; }
.toolbar .t-redo { width: 22px; margin-left: 4px; margin-right: 3px; }
.toolbar .t-search { margin-left: -4px; }
.toolbar .t-prefs { width: 22px; }
.toolbar .t-combine { width: 22px; }
.toolbar .t-globe { width: 20px; }
.toolbar .t-cup { width: 6px; margin-left: 292px; }
.toolbar .t-castle { height: 15px; margin: 0 -1px; }
.toolbar .t-factory { width: 23px; height: 25px; }

.workspace { flex: 1; min-height: 0; display: flex; background: #f0f0f0; border-top: 1px solid #696969; overflow: hidden; }
.side-tools { width: 34px; flex: none; border-right: 1px solid #696969; padding-left: 1px; margin-top: -1px; background: #f0f0f0; display: flex; flex-direction: column; gap: 18px; }
.tools { display: flex; flex-direction: column; gap: 1px; }
.tools b { width: 31px; height: 30px; display: grid; place-items: center; border: 1px solid transparent; }
.tools .on { background: #c0dcf3; border-color: #90c8f6; }
.tools svg { width: 24px; height: 24px; }
.tools .short { height: 24px; }
.map { width: 1272px; flex: none; background: #000; overflow: hidden; }
.canvas { width: 1272px; height: 723px; }
.canvas text { fill: #fff; font: 12px "DejaVu Sans", sans-serif; }
.way { fill: none; stroke: #f00; stroke-width: 2; }
.nodes { fill: none; stroke: #ff0; }

.panels { flex: 1; min-height: 0; overflow: hidden; padding: 0 3px 0 5px; display: flex; flex-direction: column; gap: 6px; font: 13px "DejaVu Sans Condensed", "DejaVu Sans", sans-serif; letter-spacing: -0.32px; }
.panel { flex: none; height: 140px; display: flex; flex-direction: column; border: 1px solid #a0a0a0; box-shadow: inset 1px 1px #fff; padding: 0 0 1px 1px; }
.panel.layers { height: 91px; }
.panel.last { flex: 1; min-height: 0; padding-bottom: 0; border-bottom: 0; }
.panel header { height: 21px; flex: none; display: flex; align-items: center; padding: 0 1px 2px 2px; }
.min { width: 11px; height: 11px; margin-top: 3px; }
.ico { width: 16px; height: 16px; margin: 0 8px 0 3px; opacity: .85; }
.panel h2 { margin: 0 auto 0 0; font: inherit; }
.panel h2.wide { letter-spacing: 0; }
.hb { width: 15px; height: 15px; margin-left: 2px; border: 1px solid #adadad; background: #e1e1e1; }
.list { flex: 1; min-height: 0; border: 1px solid #828790; background: #fff; overflow: hidden; }
.list.gray { background: #f0f0f0; }
.filter { height: 22px; border: 1px solid #a0a0a0; background: #fff; }
.layer-row { height: 16px; display: flex; align-items: center; }
.ok { width: 12px; height: 12px; margin-left: 1px; }
.eye { width: 12px; height: 10px; margin: 0 5px 0 17px; }
.layer-name { flex: 1; height: 16px; display: flex; align-items: center; gap: 4px; background: #3399ff; color: #fff; font-weight: bold; letter-spacing: 0.15px; font-size: 12.8px; }
.layer-name svg { width: 16px; height: 16px; }
.way-row { height: 18px; display: flex; align-items: center; gap: 3px; padding-left: 2px; letter-spacing: -0.1px; }
.way-row svg { width: 16px; height: 16px; }
.style-row { height: 17px; display: flex; align-items: center; gap: 4px; letter-spacing: -0.15px; }
.style-row i { width: 16px; height: 16px; border: 1px solid #222; background: #fff; margin-left: 1px; }
.style-row svg { width: 13px; height: 13px; }
.style-edge { width: 15px; height: 1px; background: #222; margin: 2px 0 0 1px; }
.panel footer { height: 25px; flex: none; display: grid; gap: 2px; padding: 1px 2px 1px 1px; }
.panel footer.five { grid-template-columns: repeat(5, 118px); padding-left: 3px; }
.panel footer.three { grid-template-columns: repeat(3, 199px); }
.panel button { position: relative; display: flex; align-items: center; justify-content: center; gap: 4px; padding: 0; border: 1px solid #adadad; background: #e1e1e1; font: inherit; letter-spacing: inherit; color: #000; }
.panel button:disabled { background: #ccc; border-color: #bfbfbf; color: #838383; }
.panel button svg { width: 18px; height: 18px; }
.panel button .s14 { width: 14px; height: 14px; }
.panel button .s16 { width: 16px; height: 16px; }
.panel button .s20 { width: 20px; height: 20px; }
.drop em { position: absolute; right: 0; top: 0; bottom: 0; width: 16px; background: #f0f0f0; display: grid; place-items: center; }
.drop em::before { content: ""; border: 4px solid transparent; border-top: 5px solid #000; border-bottom: 0; }

.popup { position: absolute; background: #f0f0f0; border: 1px solid #a0a0a0; padding: 2px; letter-spacing: -0.4px; }
.popup-presets { left: 343px; top: 53px; width: 311px; height: 345px; }
.popup-facilities { left: 647px; top: 197px; width: 171px; height: 269px; }
.popup-education { left: 811px; top: 350px; width: 147px; height: 116px; }
.item { height: 22px; display: flex; align-items: center; padding-left: 3px; white-space: nowrap; line-height: 22px; }
.item.low { height: 21px; line-height: 20px; padding-bottom: 1px; }
.item.hot { background: #91c9f7; }
.item svg { width: 16px; height: 16px; margin-right: 14px; }
.item .fade { opacity: .75; }
.item .chev { width: 6px; height: 10px; margin: 0 2px 0 auto; }
.popup-facilities .item .chev { margin-right: 3px; }
.item kbd { font: inherit; margin-left: auto; width: 70px; }
.popup hr { height: 1px; border: 0; margin: 5px 2px 6px 30px; background: #c8c8c8; }
```
